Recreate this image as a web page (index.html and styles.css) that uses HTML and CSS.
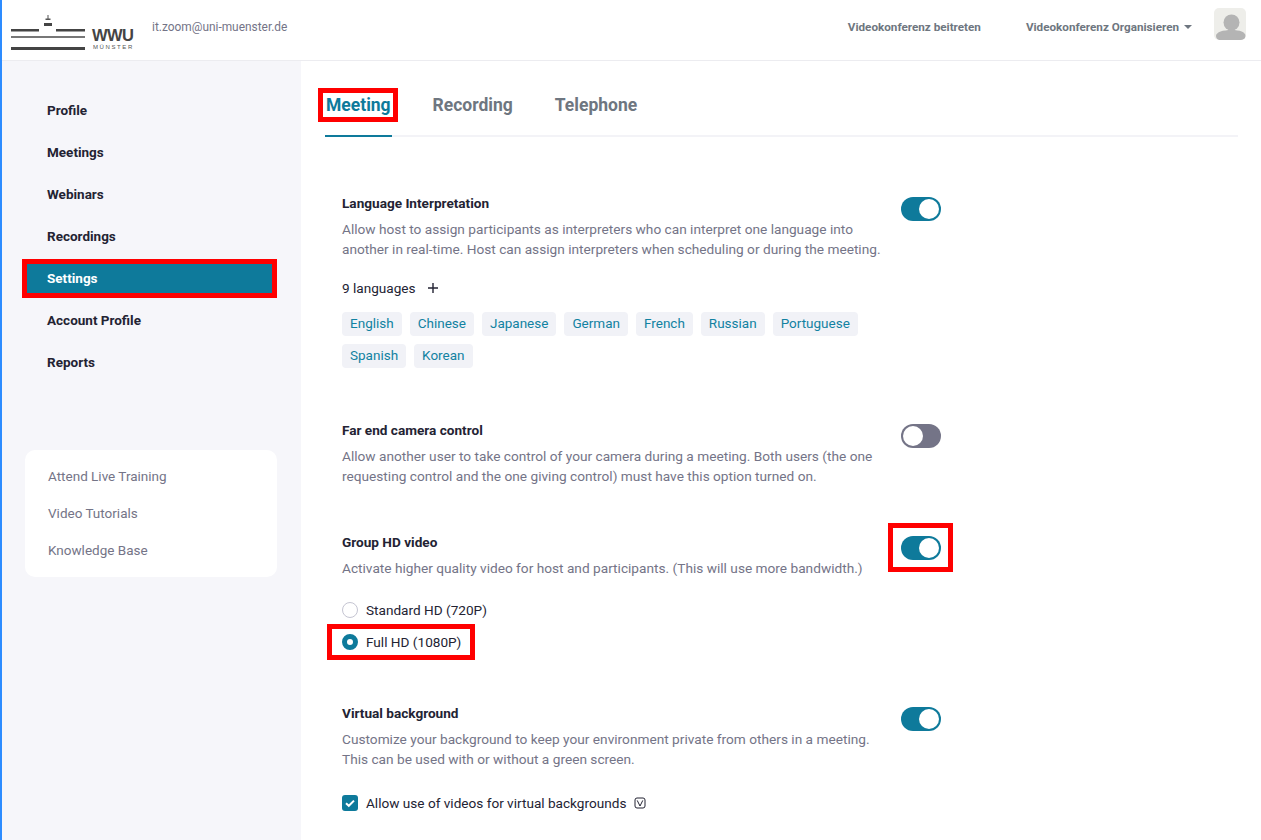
FILE: index.html
```html
<!DOCTYPE html>
<html lang="en">
<head>
<meta charset="utf-8">
<title>Settings</title>
<link rel="stylesheet" href="styles.css">
</head>
<body>
<div class="page">
  <header class="topbar">
    <div class="brand">
      <svg class="logo-mark" width="76" height="36" viewBox="0 0 76 36">
        <rect x="0" y="14" width="28" height="2.5" fill="#444"/>
        <rect x="45" y="14" width="29" height="2.5" fill="#444"/>
        <rect x="0" y="21" width="74" height="2" fill="#777"/>
        <rect x="0" y="32" width="74" height="3" fill="#444"/>
        <rect x="33" y="8" width="8" height="3" fill="#444"/>
        <rect x="34.5" y="3.5" width="5" height="1.5" fill="#555"/>
        <rect x="36.5" y="0" width="1" height="4" fill="#555"/>
      </svg>
      <div class="wordmark">
        <span class="wwu">WWU</span>
        <span class="city">MÜNSTER</span>
      </div>
      <span class="email">it.zoom@uni-muenster.de</span>
    </div>
    <nav class="topnav">
      <a class="toplink join">Videokonferenz beitreten</a>
      <a class="toplink">Videokonferenz Organisieren<span class="caret"></span></a>
      <div class="avatar">
        <svg width="32" height="32" viewBox="0 0 32 32">
          <circle cx="17.5" cy="14.5" r="8" fill="#b4b4b4"/>
          <path d="M2 28 c0-4 7-6 15.500-6 s14 2 14 6 v0 c0 2-1 4-3 4 h-23 c-2 0-3.500-2-3.500-4 z" fill="#b4b4b4"/>
        </svg>
      </div>
    </nav>
  </header>
  <div class="body">
    <aside class="sidebar">
      <ul class="sidenav">
        <li class="sideitem">Profile</li>
        <li class="sideitem">Meetings</li>
        <li class="sideitem">Webinars</li>
        <li class="sideitem">Recordings</li>
        <li class="sideitem active">Settings</li>
        <li class="sideitem">Account Profile</li>
        <li class="sideitem">Reports</li>
      </ul>
      <div class="helpcard">
        <a class="helplink">Attend Live Training</a>
        <a class="helplink">Video Tutorials</a>
        <a class="helplink">Knowledge Base</a>
      </div>
    </aside>
    <main class="content">
      <div class="tabs">
        <a class="tab current">Meeting</a>
        <a class="tab">Recording</a>
        <a class="tab">Telephone</a>
      </div>

      <section class="setting first">
        <div class="setting-head">
          <div class="setting-text">
            <h3 class="title">Language Interpretation</h3>
            <p class="desc">Allow host to assign participants as interpreters who can interpret one language into another in real-time. Host can assign interpreters when scheduling or during the meeting.</p>
          </div>
          <span class="toggle on"></span>
        </div>
        <div class="langs"><span>9 languages</span>
          <svg width="10" height="10" viewBox="0 0 10 10"><path d="M5 0v10M0 5h10" stroke="#232333" stroke-width="1.4"/></svg>
        </div>
        <div class="tags">
          <span class="tag">English</span><span class="tag">Chinese</span><span class="tag">Japanese</span><span class="tag">German</span><span class="tag">French</span><span class="tag">Russian</span><span class="tag">Portuguese</span><span class="tag">Spanish</span><span class="tag">Korean</span>
        </div>
      </section>

      <section class="setting far">
        <div class="setting-head">
          <div class="setting-text">
            <h3 class="title">Far end camera control</h3>
            <p class="desc">Allow another user to take control of your camera during a meeting. Both users (the one requesting control and the one giving control) must have this option turned on.</p>
          </div>
          <span class="toggle"></span>
        </div>
      </section>

      <section class="setting hd">
        <div class="setting-head">
          <div class="setting-text">
            <h3 class="title">Group HD video</h3>
            <p class="desc">Activate higher quality video for host and participants. (This will use more bandwidth.)</p>
          </div>
          <span class="toggle on marked"></span>
        </div>
        <div class="options">
          <label class="option"><span class="radio"></span>Standard HD (720P)</label>
          <label class="option marked-row"><span class="radio checked"></span>Full HD (1080P)</label>
        </div>
      </section>

      <section class="setting vb">
        <div class="setting-head">
          <div class="setting-text">
            <h3 class="title">Virtual background</h3>
            <p class="desc">Customize your background to keep your environment private from others in a meeting. This can be used with or without a green screen.</p>
          </div>
          <span class="toggle on"></span>
        </div>
        <label class="option check-row">
          <span class="checkbox"><svg width="16" height="16" viewBox="0 0 16 16"><path d="M4 8.200l2.800 2.600L12 5.600" fill="none" stroke="#fff" stroke-width="2"/></svg></span>
          Allow use of videos for virtual backgrounds
          <svg class="vbadge" width="12" height="12" viewBox="0 0 12 12"><rect x="1" y="1" width="10" height="10" rx="2" fill="none" stroke="#232333"/><path d="M3.200 3.400L6 9l2.800-5.600" fill="none" stroke="#232333"/></svg>
        </label>
      </section>
    </main>
  </div>
</div>
</body>
</html>
```
FILE: styles.css
```css
*, *::before, *::after { box-sizing: border-box; }
html, body { margin: 0; padding: 0; height: 100%; overflow: hidden; }
body { font-family: Roboto, "Liberation Sans", sans-serif; font-size: 13.6px; color: #232333; background: #fff; }
.page { height: 840px; border-left: 2px solid #2d8cff; display: flex; flex-direction: column; }
.topbar { height: 61px; flex: none; border-bottom: 1px solid #ececf0; display: flex; justify-content: space-between; padding: 0 15px 0 9px; }
.brand { display: flex; align-items: flex-start; }
.logo-mark { margin-top: 15px; }
.wordmark { display: flex; flex-direction: column; margin: 27px 0 0 5px; width: 42px; }
.wwu { font: bold 16.5px/16px "Liberation Sans", sans-serif; color: #444; letter-spacing: -0.6px; }
.city { font: 6px/8px "Liberation Sans", sans-serif; color: #555; letter-spacing: 1.6px; margin-left: 1px; }
.email { font-size: 11.9px; line-height: 16px; margin: 19px 0 0 18px; color: #747487; }
.topnav { display: flex; align-items: flex-start; }
.toplink { font-size: 11.7px; line-height: 16px; font-weight: 700; color: #6e7680; margin-top: 19px; }
.join { margin-right: 45px; }
.caret { display: inline-block; width: 0; height: 0; margin-left: 5px; vertical-align: 2px; border: 4px solid transparent; border-top-color: #6e7680; border-bottom: 0; }
.avatar { width: 32px; height: 32px; margin: 8px 0 0 22px; border-radius: 5px; background: #eeeeea; overflow: hidden; }
.avatar svg { display: block; }

.body { flex: 1; display: flex; min-height: 0; }
.sidebar { width: 299px; flex: none; background: #f6f6fa; padding: 35px 0 0 25px; }
.sidenav { list-style: none; margin: 0; padding: 0; display: flex; flex-direction: column; gap: 13px; }
.sideitem { height: 29px; line-height: 28px; width: 245px; padding-left: 20px; font-weight: 700; font-size: 13.5px; color: #232333; }
.sideitem.active { background: #0e7a9b; color: #fff; outline: 5px solid #f00; }
.helpcard { margin: 73px 0 0 -2px; width: 252px; height: 127px; background: #fff; border-radius: 10px; padding: 8px 0 0 23px; display: flex; flex-direction: column; }
.helplink { font-size: 13.5px; line-height: 37px; color: #747487; }

.content { flex: 1; padding: 0 23px 0 24px; min-width: 0; }
.tabs { height: 76px; display: flex; gap: 40px; border-bottom: 2px solid #f3f3f7; }
.tab { position: relative; height: 76px; padding: 31px 1px 0; font-size: 17.5px; line-height: 26px; font-weight: 700; color: #6e7680; }
.tab.current { color: #0e7a9b; border-bottom: 2px solid #0e7a9b; }
.tab.current::after { content: ""; position: absolute; top: 27px; left: -7px; right: -6px; height: 34px; border: 5px solid #f00; }

.setting { padding-left: 17px; width: 616px; }
.first { margin-top: 56px; }
.far { margin-top: 52px; }
.hd { margin-top: 46px; }
.vb { margin-top: 51px; }
.setting-head { display: flex; justify-content: space-between; align-items: flex-start; }
.setting-text { width: 545px; }
.title { margin: 0; font-size: 13.6px; line-height: 20px; font-weight: 700; color: #232333; }
.desc { margin: 6px 0 0; font-size: 13.68px; line-height: 20px; color: #747487; }
.toggle { position: relative; display: block; flex: none; width: 40px; height: 24px; margin-top: 4px; border-radius: 12px; background: #747487; }
.toggle::before { content: ""; position: absolute; top: 2px; left: 2px; width: 20px; height: 20px; border-radius: 50%; background: #fff; }
.toggle.on { background: #0e7a9b; }
.toggle.on::before { left: 18px; }
.toggle.marked::after { content: ""; position: absolute; top: -13px; left: -13px; right: -12px; bottom: -12px; border: 5px solid #f00; }

.langs { margin-top: 19px; display: flex; align-items: center; gap: 12px; line-height: 20px; }
.tags { display: flex; flex-wrap: wrap; gap: 8px; margin-top: 14px; width: 540px; }
.tag { height: 24px; line-height: 23px; padding: 0 8px; border-radius: 4px; background: #f1f2f7; color: #1282a2; font-size: 13.5px; }

.options { margin-top: 22px; display: flex; flex-direction: column; gap: 12px; }
.option { position: relative; display: flex; align-items: center; height: 20px; line-height: 20px; white-space: nowrap; }
.radio { width: 16px; height: 16px; margin-right: 8px; border-radius: 50%; border: 1px solid #c5c5d2; background: #fff; flex: none; }
.radio.checked { border: 5px solid #0e7a9b; }
.marked-row { width: 118px; }
.marked-row::after { content: ""; position: absolute; top: -8px; left: -15px; width: 148px; height: 36px; border: 5px solid #f00; }
.check-row { margin-top: 24px; }
.checkbox { width: 16px; height: 16px; margin-right: 8px; border-radius: 3px; background: #0e7a9b; flex: none; }
.checkbox svg { display: block; }
.vbadge { margin-left: 8px; }
```
